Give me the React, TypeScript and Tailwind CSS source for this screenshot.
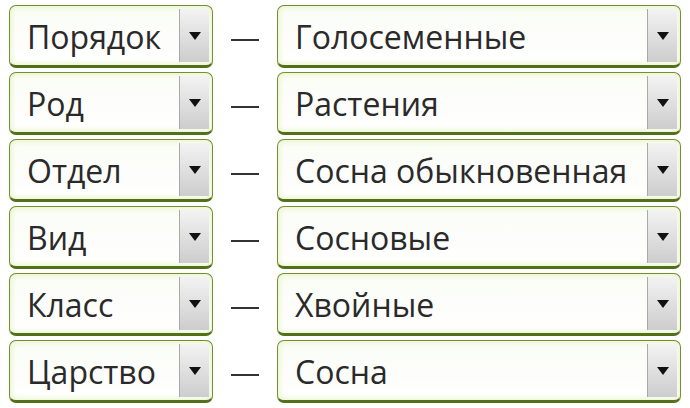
import React from 'react';

const rows: [string, string][] = [
  ['Порядок', 'Голосеменные'],
  ['Род', 'Растения'],
  ['Отдел', 'Сосна обыкновенная'],
  ['Вид', 'Сосновые'],
  ['Класс', 'Хвойные'],
  ['Царство', 'Сосна'],
];

const Arrow: React.FC = () => (
  <svg width="12" height="8" viewBox="0 0 12 8">
    <path d="M0 0 H12 L6 8 Z" fill="#111" />
  </svg>
);

interface SelectBoxProps {
  value: string;
  width: string;
}

const SelectBox: React.FC<SelectBoxProps> = ({ value, width }) => (
  <div
    className={`${width} h-[63px] flex items-stretch rounded-[7px] border-[1.5px] border-b-[3px] border-[#72902f] border-b-[#52701a] bg-gradient-to-b from-[#fafcf5] to-[#ffffff] shadow-[inset_0_0_5px_2px_#ebf5cf] overflow-hidden`}
  >
    <div className="flex-1 flex items-center pl-[17px] pt-[3px] text-[32px] text-[#2a2a2a] leading-none whitespace-nowrap">
      {value}
    </div>
    <div className="w-[30px] my-[3px] mr-[3px] flex items-center justify-center border-l border-[#a9a9a9] bg-gradient-to-b from-[#f3f3f3] to-[#cdcdcd]">
      <Arrow />
    </div>
  </div>
);

const App: React.FC = () => {
  return (
    <div
      className="w-[690px] h-[408px] bg-white pt-[5px] pl-[9px] flex flex-col gap-[4px]"
      style={{ fontFamily: '"Open Sans", "Noto Sans", sans-serif' }}
    >
      {rows.map(([left, right]) => (
        <div key={left} className="flex items-center">
          <SelectBox value={left} width="w-[204px]" />
          <div className="w-[64px] flex justify-center">
            <div className="w-[28px] h-[2px] bg-[#333] mt-[6px]" />
          </div>
          <SelectBox value={right} width="w-[404px]" />
        </div>
      ))}
    </div>
  );
};

export default App;
